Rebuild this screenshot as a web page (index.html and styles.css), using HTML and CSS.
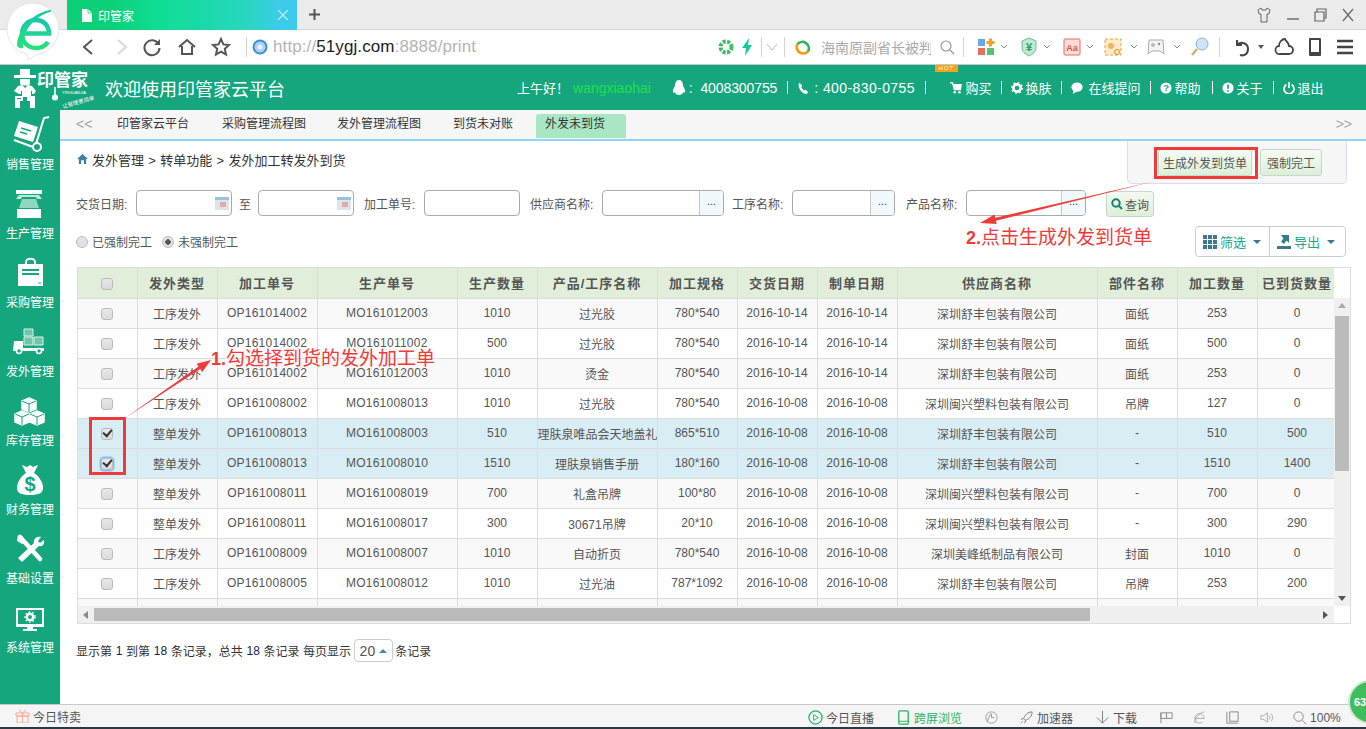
FILE: index.html
```html
<!DOCTYPE html>
<html lang="zh-CN">
<head>
<meta charset="utf-8">
<title>印管家</title>
<link rel="stylesheet" href="styles.css">
</head>
<body>
<div class="browser">
  <div class="tabbar">
    <div class="tab">
      <svg class="tab-file" viewBox="0 0 10 13"><path d="M0 0h6l4 4v9H0z" fill="#fff"/><path d="M6 0v4h4" fill="none" stroke="#0cc874" stroke-width=".8"/></svg>
      <span class="tab-title">印管家</span>
      <svg class="tab-close" viewBox="0 0 10 10"><path d="M0 0l10 10M10 0L0 10" stroke="#c8f4ff" stroke-width="1.2"/></svg>
    </div>
    <svg class="tab-new" viewBox="0 0 11 11"><path d="M5.5 0v11M0 5.5h11" stroke="#555" stroke-width="2"/></svg>
    <div class="winctl">
      <svg viewBox="0 0 14 16"><path d="M4 1L1 3l1 4h2v8h6V7h2l1-4-3-2-1 2H5z" fill="none" stroke="#666"/></svg>
      <svg class="m15" viewBox="0 0 14 16"><path d="M1 12h12" stroke="#666" stroke-width="1.4"/></svg>
      <svg class="m13" viewBox="0 0 14 16"><path d="M2 5h9v9H2zM4 5V2h9v9h-2" fill="none" stroke="#666" stroke-width="1.2"/></svg>
      <svg class="m14" viewBox="0 0 14 16"><path d="M2 2l10 12M12 2L2 14" stroke="#666" stroke-width="1.2"/></svg>
    </div>
  </div>

  <div class="addrbar">
    <svg class="tb" viewBox="0 0 20 20"><path d="M14 3L6 10l8 7" fill="none" stroke="#555" stroke-width="2"/></svg>
    <svg class="tb m14" viewBox="0 0 20 20"><path d="M6 3l8 7-8 7" fill="none" stroke="#d8d8d8" stroke-width="2"/></svg>
    <svg class="tb m10" viewBox="0 0 20 20"><path d="M16.5 7A7.5 7.5 0 1 0 17.5 11" fill="none" stroke="#555" stroke-width="2"/><path d="M18 2v6h-6z" fill="#555"/></svg>
    <svg class="tb m15" viewBox="0 0 20 20"><path d="M2 10l8-7 8 7M5 9v8h10V9" fill="none" stroke="#555" stroke-width="2"/></svg>
    <svg class="tb m14" viewBox="0 0 20 20"><path d="M10 2l2.4 5.4 5.6.6-4.2 3.8 1.2 5.7L10 14.6 5 17.5l1.2-5.7L2 8l5.6-.6z" fill="none" stroke="#555" stroke-width="2"/></svg>
    <span class="vline m15"></span>
    <svg class="globe m5" viewBox="0 0 16 16"><circle cx="8" cy="8" r="6.5" fill="#a9d2f5" stroke="#3d8fd8" stroke-width="2"/><circle cx="8" cy="8" r="2.5" fill="#e8f4fd"/></svg>
    <div class="url"><span class="url-dim">http://</span><span class="url-host">51ygj.com</span><span class="url-dim">:8888/print</span></div>

    <svg class="tb" viewBox="0 0 20 20"><circle cx="10" cy="10" r="5.5" fill="none" stroke="#45b863" stroke-width="4" stroke-dasharray="3 1.4"/></svg>
    <svg class="tb m1" viewBox="0 0 20 20"><path d="M12 1L5 11h4l-1 8 7-11h-4z" fill="#12c9a0"/></svg>
    <span class="vline m4"></span>
    <svg class="chev-lg m4" viewBox="0 0 12 12"><path d="M1 3l5 6 5-6" fill="none" stroke="#bbb"/></svg>
    <span class="vline m6"></span>
    <svg class="globe m10" viewBox="0 0 16 16"><path d="M8 14.5A6.5 6.5 0 0 1 2.500 5" fill="none" stroke="#f29a12" stroke-width="2.6"/><path d="M2.500 5A6.500 6.500 0 0 1 13 12.500" fill="none" stroke="#2fb35b" stroke-width="2.600"/><path d="M13 12.500A6.500 6.500 0 0 1 8 14.500" fill="none" stroke="#f29a12" stroke-width="2.600"/></svg>
    <div class="search-text m10">海南原副省长被判</div>
    <svg class="globe m8" viewBox="0 0 16 16"><circle cx="7" cy="7" r="5" fill="none" stroke="#999" stroke-width="1.200"/><path d="M11 11l4 4" stroke="#999" stroke-width="1.200"/></svg>
    <span class="vline m8"></span>
    <svg class="tb m12" viewBox="0 0 20 20"><rect x="2" y="2" width="7" height="7" fill="#6aa7ea"/><rect x="2" y="11" width="7" height="7" fill="#e46f5f"/><rect x="11" y="11" width="7" height="7" fill="#5cbf76"/><path d="M14.500 1.500v8M10.500 5.500h8" stroke="#f2a31e" stroke-width="3"/></svg>
    <svg class="chev m4" viewBox="0 0 8 6"><path d="M1 1l3 3 3-3" fill="none" stroke="#888"/></svg>
    <svg class="tb m11" viewBox="0 0 20 20"><path d="M10 1l7 3v6c0 5-3 7-7 9-4-2-7-4-7-9V4z" fill="#bfe8d2" stroke="#6bbd92"/><text x="10" y="14" class="ico-text green-t">¥</text></svg>
    <svg class="chev m4" viewBox="0 0 8 6"><path d="M1 1l3 3 3-3" fill="none" stroke="#888"/></svg>
    <svg class="tb m11" viewBox="0 0 20 20"><rect x="2" y="2" width="16" height="16" rx="1" fill="#fbdcd8" stroke="#e46f5f"/><text x="10" y="14" class="ico-text red-t">Aa</text></svg>
    <svg class="chev m4" viewBox="0 0 8 6"><path d="M1 1l3 3 3-3" fill="none" stroke="#888"/></svg>
    <svg class="tb m9" viewBox="0 0 20 20"><rect x="2" y="2" width="16" height="16" fill="#fdeccc" stroke="#f0a020" stroke-dasharray="3 2"/><circle cx="8" cy="9" r="3" fill="#f2b35e"/><circle cx="14" cy="15" r="2.500" fill="none" stroke="#e88420"/></svg>
    <svg class="chev m7" viewBox="0 0 8 6"><path d="M1 1l3 3 3-3" fill="none" stroke="#888"/></svg>
    <svg class="tb m8" viewBox="0 0 20 20"><path d="M3 3h14l1 14-4-3H6l-4 3z" fill="#f4f4f4" stroke="#aaa"/><circle cx="13" cy="7" r="1.200" fill="#e46f5f"/><circle cx="7" cy="8" r="2" fill="#bbb"/></svg>
    <svg class="chev m7" viewBox="0 0 8 6"><path d="M1 1l3 3 3-3" fill="none" stroke="#888"/></svg>
    <svg class="tb m9" viewBox="0 0 20 20"><circle cx="12" cy="7" r="6" fill="#cfe4f4" stroke="#8ab2d2"/><path d="M7 12l-5 6" stroke="#d4b078" stroke-width="2.500"/></svg>
    <span class="vline m9"></span>
    <svg class="tb m12" viewBox="0 0 20 20"><path d="M5 3v5h5M5 8c4-4 11-2 11 4s-5 7-8 6" fill="none" stroke="#444" stroke-width="2"/></svg>
    <svg class="chev m5" viewBox="0 0 8 6"><path d="M1 1h6L4 5z" fill="#555"/></svg>
    <svg class="tb m9" viewBox="0 0 20 20"><path d="M6 17a4 4 0 0 1-1-8c0-4 3-7 6-7 0 2 4 3 4 7a4 4 0 0 1 0 8z" fill="none" stroke="#444" stroke-width="1.800"/></svg>
    <svg class="tb m11" viewBox="0 0 20 20"><rect x="4" y="1" width="12" height="18" rx="1" fill="#444"/><rect x="6" y="3" width="8" height="12" fill="#fff"/></svg>
    <svg class="tb m10" viewBox="0 0 20 20"><path d="M2 4h16M2 10h16M2 16h16" stroke="#444" stroke-width="2.400"/></svg>
  </div>

  <header class="apphead">
    <div class="logo">
      <svg class="logo-man" viewBox="0 0 22 40"><path d="M6 0h10v6h6v3H0V6h6z" fill="#fff"/><path d="M6 10h10v5c-2 2-8 2-10 0z" fill="#fff"/><path d="M4 17l4-1 3 3 3-3 4 1 4 5-2 3h-2v-3h-1v6H8v-6H7v3H5l-5-3z" fill="#fff"/><path d="M1 27h8v5H6v7H1zM3 29v1h4v-1zM13 27h8v12h-5v-7h-3z" fill="#fff"/></svg>
      <svg class="logo-stem" viewBox="0 0 8 14"><path d="M4 0v9" stroke="#fff" stroke-width="1.500"/><circle cx="4" cy="10.500" r="3" fill="#fff"/></svg>
      <div class="logo-words">
        <div class="logo-name">印管家</div>
        <div class="logo-pin">YINGUANJIA</div>
        <div class="logo-slogan">让管理更简单</div>
      </div>
    </div>
    <div class="welcome">欢迎使用印管家云平台</div>
    <nav class="headnav">
      <span>上午好！</span>
      <span class="username">wangxiaohai</span>
      <svg class="hi-qq" viewBox="0 0 14 16"><path d="M7 0c3 0 4 3 4 6 2 3 3 6 1 7l-1-1c0 2-2 3-4 3s-4-1-4-3l-1 1C0 12 1 9 3 6c0-3 1-6 4-6z" fill="#fff"/></svg>
      <span class="num tel1">: 4008300755</span><i class="sep"></i>
      <svg class="hi" viewBox="0 0 14 14"><path d="M3 1l3 3-1 2 3 4 2-1 3 3-2 2C6 14 1 7 2 2z" fill="#fff"/></svg>
      <span class="num tel2">: 400-830-0755</span><i class="sep sep-cart"></i>
      <span class="buy">
        <em class="hot">HOT</em>
        <svg class="hi" viewBox="0 0 14 14"><path d="M0 1h3l2 8h7l1-6H4" fill="none" stroke="#fff" stroke-width="1.500"/><path d="M4 3h9l-1 6H5z" fill="#fff"/><circle cx="5.500" cy="12" r="1.500" fill="#fff"/><circle cx="11" cy="12" r="1.500" fill="#fff"/></svg>
        <span class="buy-text">购买</span>
      </span><i class="sep"></i>
      <svg class="hi" viewBox="0 0 14 14"><circle cx="7" cy="7" r="4.200" fill="none" stroke="#fff" stroke-width="3"/><circle cx="7" cy="7" r="6" fill="none" stroke="#fff" stroke-width="2" stroke-dasharray="2 2.700"/></svg>
      <span>换肤</span><i class="sep"></i>
      <svg class="hi hi-wide" viewBox="0 0 14 14"><ellipse cx="7" cy="6" rx="6.500" ry="5.500" fill="#fff"/><path d="M3 9l-1 5 5-3z" fill="#fff"/></svg>
      <span>在线提问</span><i class="sep"></i>
      <svg class="hi" viewBox="0 0 14 14"><circle cx="7" cy="7" r="6.500" fill="#fff"/><text x="7" y="11" class="ico-text hd-t">?</text></svg>
      <span class="tail2">帮助</span><i class="sep"></i>
      <svg class="hi" viewBox="0 0 14 14"><circle cx="7" cy="7" r="6.500" fill="#fff"/><path d="M7 3v5M7 9.500v2" stroke="#16a67e" stroke-width="2"/></svg>
      <span class="tail3">关于</span><i class="sep"></i>
      <svg class="hi" viewBox="0 0 14 14"><path d="M4 3a5.800 5.800 0 1 0 6 0" fill="none" stroke="#fff" stroke-width="2"/><path d="M7 0v7" stroke="#fff" stroke-width="2"/></svg>
      <span>退出</span>
    </nav>
  </header>

  <div class="appbody">
    <aside class="sidebar">
      <a class="side-item">
        <svg viewBox="0 0 44 40"><path d="M11 9l19 6-5 15-19-6z" fill="#fff"/><path d="M13 16l10 3M12 20l7 2" stroke="#16a67e" stroke-width="1.500"/><path d="M41 5l-5 1-8 26" fill="none" stroke="#fff" stroke-width="2"/><circle cx="29" cy="35" r="4" fill="none" stroke="#fff" stroke-width="2"/><path d="M6 28l19 7" stroke="#fff" stroke-width="2"/></svg>
        <span>销售管理</span>
      </a>
      <a class="side-item">
        <svg viewBox="0 0 44 40"><path d="M8 9h26v4H8z" fill="#fff"/><path d="M11 14h20l3 4h-5l-1-2H14l-1 2H8z" fill="#bfe9da"/><path d="M14 18h14l3 9H11z" fill="#8fd6bf"/><path d="M9 28h24v9H9z" fill="#fff"/></svg>
        <span>生产管理</span>
      </a>
      <a class="side-item">
        <svg viewBox="0 0 44 40"><path d="M10 14h25v22H10z" fill="#fff"/><path d="M18 14v-2a4 3 0 0 1 9 0v2" fill="none" stroke="#fff" stroke-width="2"/><path d="M14 20h17M14 24h17" stroke="#16a67e" stroke-width="2"/><path d="M30 33h3" stroke="#8fd6bf" stroke-width="2"/></svg>
        <span>采购管理</span>
      </a>
      <a class="side-item">
        <svg viewBox="0 0 44 40"><path d="M16 10h9v7h-9zM16 18h9v8h-9zM26 18h9v8h-9z" fill="#6cc7aa" stroke="#d5f0e7"/><path d="M6 22h9v7h21v3H5z" fill="#fff"/><circle cx="11" cy="32" r="2.500" fill="#16a67e" stroke="#fff" stroke-width="1.500"/><circle cx="31" cy="32" r="2.500" fill="#16a67e" stroke="#fff" stroke-width="1.500"/></svg>
        <span>发外管理</span>
      </a>
      <a class="side-item">
        <svg viewBox="0 0 44 40"><g fill="none" stroke="#fff" stroke-width="1.500"><path d="M21 10l7 3v8l-7 3-7-3v-8z" fill="#fff"/><path d="M14 23l7 3v8l-7 3-7-3v-8z" fill="#fff"/><path d="M29 23l7 3v8l-7 3-7-3v-8z" fill="#fff"/></g><path d="M14 13l7 3 7-3M21 16v8M7 26l7 3 7-3M14 29v8M22 26l7 3 7-3M29 29v8" fill="none" stroke="#16a67e"/></svg>
        <span>库存管理</span>
      </a>
      <a class="side-item">
        <svg viewBox="0 0 44 40"><path d="M14 8l5 2 3-2 3 2 5-2-4 8c6 4 9 10 9 15 0 5-4 7-13 7s-13-2-13-7c0-5 3-11 9-15z" fill="#fff"/><text x="22" y="34" class="ico-text money-t">$</text></svg>
        <span>财务管理</span>
      </a>
      <a class="side-item">
        <svg viewBox="0 0 44 40"><path d="M12 11l20 22" stroke="#fff" stroke-width="4.500" stroke-linecap="round"/><path d="M10 9l4 1 3 5-3 3-5-3z" fill="#fff"/><path d="M33 11l-3 4 2 2 4-3c1 3-1 7-5 6L14 36l-4-4 16-15c-1-4 3-7 7-6z" fill="#fff"/></svg>
        <span>基础设置</span>
      </a>
      <a class="side-item">
        <svg viewBox="0 0 44 40"><rect x="9" y="14" width="26" height="16" fill="none" stroke="#fff" stroke-width="2"/><path d="M8 30h28v2H8zM19 32h6v2h4v2H15v-2h4z" fill="#fff"/><circle cx="22" cy="22" r="3.200" fill="none" stroke="#fff" stroke-width="2.400"/><circle cx="22" cy="22" r="5" fill="none" stroke="#fff" stroke-width="1.500" stroke-dasharray="1.500 2.100"/></svg>
        <span>系统管理</span>
      </a>
    </aside>

    <main class="main">
      <div class="tabstrip">
        <span class="nav-prev">&lt;&lt;</span>
        <a class="pt pt1">印管家云平台</a>
        <a class="pt pt2">采购管理流程图</a>
        <a class="pt pt3">发外管理流程图</a>
        <a class="pt pt4">到货未对账</a>
        <a class="pt pt-active">外发未到货</a>
        <span class="nav-next">&gt;&gt;</span>
      </div>

      <div class="crumb">
        <svg class="crumb-home" viewBox="0 0 12 11"><path d="M6 0l6 5.500h-2V11H7.500V7h-3v4H2V5.500H0z" fill="#3f7f9e"/></svg>
        <span>发外管理 &gt; 转单功能 &gt; 发外加工转发外到货</span>
      </div>

      <div class="filters">
        <label class="lbl l54">交货日期:</label>
        <div class="box w96 m6"><input class="inp"><svg class="cal" viewBox="0 0 14 13"><rect width="14" height="13" fill="#d9e6ee"/><rect y="0" width="14" height="3" fill="#9dc2d8"/><rect x="5" y="5" width="6" height="5" fill="#e9a9a0"/></svg></div>
        <span class="lbl l12 m7">至</span>
        <div class="box w96 m7"><input class="inp"><svg class="cal" viewBox="0 0 14 13"><rect width="14" height="13" fill="#d9e6ee"/><rect y="0" width="14" height="3" fill="#9dc2d8"/><rect x="5" y="5" width="6" height="5" fill="#e9a9a0"/></svg></div>
        <label class="lbl l54 m10">加工单号:</label>
        <div class="box w96 m6"><input class="inp"></div>
        <label class="lbl l65 m10">供应商名称:</label>
        <div class="box w122 m7"><input class="inp"><span class="more">...</span></div>
        <label class="lbl l54 m8">工序名称:</label>
        <div class="box w103 m6"><input class="inp"><span class="more">...</span></div>
        <label class="lbl l54 m11">产品名称:</label>
        <div class="box w120 m6"><input class="inp"><span class="more">...</span></div>
        <button class="query">
          <svg viewBox="0 0 12 12"><circle cx="5" cy="5" r="3.700" fill="none" stroke="#16806a" stroke-width="2"/><path d="M8 8l3 3" stroke="#16806a" stroke-width="2"/></svg>查询
        </button>
      </div>

      <div class="toolrow">
        <div class="radios">
          <span class="radio"></span><span class="radio-text">已强制完工</span>
          <span class="radio radio-on m10"></span><span class="radio-text">未强制完工</span>
        </div>
        <div class="btngroup">
          <button class="gbtn gbtn-filter">
            <svg viewBox="0 0 14 14"><path d="M0 0h4v4H0zM5 0h4v4H5zM10 0h4v4h-4zM0 5h4v4H0zM5 5h4v4H5zM10 5h4v4h-4zM0 10h4v4H0zM5 10h4v4H5zM10 10h4v4h-4z" fill="#3a7a8a"/></svg>筛选<i class="caret"></i>
          </button>
          <button class="gbtn gbtn-export">
            <svg viewBox="0 0 14 14"><path d="M0 11h14v3H0z" fill="#3a7a8a"/><path d="M4 0h8v8L9.500 5.500 7 9 4 6.500l2.500-3z" fill="#3a7a8a"/></svg>导出<i class="caret"></i>
          </button>
        </div>
      </div>

      <section class="grid">
        <div class="grid-top">
          <div class="grid-view">
            <table class="dt">
              <colgroup>
                <col class="c59"><col class="c80"><col class="c100"><col class="c140"><col class="c80"><col class="c120"><col class="c80"><col class="c80"><col class="c80"><col class="c200"><col class="c80"><col class="c80"><col class="c80">
              </colgroup>
              <thead>
                <tr><th><span class="ck"></span></th><th>发外类型</th><th>加工单号</th><th>生产单号</th><th>生产数量</th><th>产品/工序名称</th><th>加工规格</th><th>交货日期</th><th>制单日期</th><th>供应商名称</th><th>部件名称</th><th>加工数量</th><th>已到货数量</th></tr>
              </thead>
              <tbody>
                <tr class="alt"><td><span class="ck"></span></td><td>工序发外</td><td>OP161014002</td><td>MO161012003</td><td>1010</td><td>过光胶</td><td>780*540</td><td>2016-10-14</td><td>2016-10-14</td><td>深圳舒丰包装有限公司</td><td>面纸</td><td>253</td><td>0</td></tr>
                <tr><td><span class="ck"></span></td><td>工序发外</td><td>OP161014002</td><td>MO161011002</td><td>500</td><td>过光胶</td><td>780*540</td><td>2016-10-14</td><td>2016-10-14</td><td>深圳舒丰包装有限公司</td><td>面纸</td><td>500</td><td>0</td></tr>
                <tr class="alt"><td><span class="ck"></span></td><td>工序发外</td><td>OP161014002</td><td>MO161012003</td><td>1010</td><td>烫金</td><td>780*540</td><td>2016-10-14</td><td>2016-10-14</td><td>深圳舒丰包装有限公司</td><td>面纸</td><td>253</td><td>0</td></tr>
                <tr><td><span class="ck"></span></td><td>工序发外</td><td>OP161008002</td><td>MO161008013</td><td>1010</td><td>过光胶</td><td>780*540</td><td>2016-10-08</td><td>2016-10-08</td><td>深圳闽兴塑料包装有限公司</td><td>吊牌</td><td>127</td><td>0</td></tr>
                <tr class="sel"><td><span class="ck on"></span></td><td>整单发外</td><td>OP161008013</td><td>MO161008003</td><td>510</td><td>理肤泉唯品会天地盖礼</td><td>865*510</td><td>2016-10-08</td><td>2016-10-08</td><td>深圳舒丰包装有限公司</td><td>-</td><td>510</td><td>500</td></tr>
                <tr class="sel"><td><span class="ck on focus"></span></td><td>整单发外</td><td>OP161008013</td><td>MO161008010</td><td>1510</td><td>理肤泉销售手册</td><td>180*160</td><td>2016-10-08</td><td>2016-10-08</td><td>深圳舒丰包装有限公司</td><td>-</td><td>1510</td><td>1400</td></tr>
                <tr class="alt"><td><span class="ck"></span></td><td>整单发外</td><td>OP161008011</td><td>MO161008019</td><td>700</td><td>礼盒吊牌</td><td>100*80</td><td>2016-10-08</td><td>2016-10-08</td><td>深圳闽兴塑料包装有限公司</td><td>-</td><td>700</td><td>0</td></tr>
                <tr><td><span class="ck"></span></td><td>整单发外</td><td>OP161008011</td><td>MO161008017</td><td>300</td><td>30671吊牌</td><td>20*10</td><td>2016-10-08</td><td>2016-10-08</td><td>深圳闽兴塑料包装有限公司</td><td>-</td><td>300</td><td>290</td></tr>
                <tr class="alt"><td><span class="ck"></span></td><td>工序发外</td><td>OP161008009</td><td>MO161008007</td><td>1010</td><td>自动折页</td><td>780*540</td><td>2016-10-08</td><td>2016-10-08</td><td>深圳美峰纸制品有限公司</td><td>封面</td><td>1010</td><td>0</td></tr>
                <tr><td><span class="ck"></span></td><td>工序发外</td><td>OP161008005</td><td>MO161008012</td><td>1010</td><td>过光油</td><td>787*1092</td><td>2016-10-08</td><td>2016-10-08</td><td>深圳舒丰包装有限公司</td><td>吊牌</td><td>253</td><td>200</td></tr>
                <tr class="alt"><td></td><td></td><td></td><td></td><td></td><td></td><td></td><td></td><td></td><td></td><td></td><td></td><td></td></tr>
              </tbody>
            </table>
          </div>
          <div class="vscroll">
            <i class="arr arr-up"></i>
            <div class="vthumb"></div>
            <i class="arr arr-down"></i>
          </div>
        </div>
        <div class="hscroll">
          <div class="htrack">
            <i class="arr arr-left"></i>
            <div class="hthumb"></div>
            <i class="arr arr-right"></i>
          </div>
          <div class="corner"></div>
        </div>
      </section>

      <div class="pager">
        显示第 <b>1</b> 到第 <b>18</b> 条记录，总共 <b>18</b> 条记录 每页显示
        <span class="pagesize">20<i class="caret-up"></i></span>
        条记录
      </div>

      <div class="actions">
        <button class="act act-main">生成外发到货单</button>
        <button class="act">强制完工</button>
      </div>
    </main>
  </div>

  <footer class="statusbar">
    <svg class="st-gift" viewBox="0 0 15 14"><path d="M1 4h13v3H1zM2 7h11v7H2zM7.500 4v10M4 1l3.500 3L11 1" fill="none" stroke="#f4a899"/></svg>
    <span class="st-text">今日特卖</span>
    <div class="st-right">
      <svg class="st-ic" viewBox="0 0 16 16"><circle cx="8" cy="8" r="7" fill="none" stroke="#1eb85f" stroke-width="1.400"/><path d="M6 5l5 3-5 3z" fill="none" stroke="#1eb85f"/></svg>
      <span class="st-text m3">今日直播</span>
      <svg class="st-ic m22" viewBox="0 0 16 16"><rect x="3" y="1" width="10" height="14" rx="1" fill="none" stroke="#1eb85f" stroke-width="1.400"/><path d="M3 12h10" stroke="#1eb85f"/></svg>
      <span class="st-text st-green m1">跨屏浏览</span>
      <svg class="st-ic m22" viewBox="0 0 16 16"><circle cx="8" cy="8" r="6" fill="none" stroke="#999"/><path d="M8 4v4h3M3 13l4-9" fill="none" stroke="#999"/></svg>
      <svg class="st-ic m20" viewBox="0 0 16 16"><path d="M14 2c-5 0-8 4-9 7l2 2c3-1 7-4 7-9zM5 9l-3 1M7 11l-1 3M4 12l-2 2" fill="none" stroke="#777"/></svg>
      <span class="st-text m3">加速器</span>
      <svg class="st-ic m22" viewBox="0 0 16 16"><path d="M8 1v13M2 8l6 6 6-6" fill="none" stroke="#777"/></svg>
      <span class="st-text m3">下载</span>
      <svg class="st-ic m22" viewBox="0 0 16 16"><path d="M2 3h12v6H2zM8 3v6M2 3v11" fill="none" stroke="#888"/></svg>
      <svg class="st-ic m18" viewBox="0 0 16 16"><path d="M3 9h10a5 5 0 1 0-2 4M13 2C8 3 3 8 3 14" fill="none" stroke="#aaa"/></svg>
      <svg class="st-ic m18" viewBox="0 0 16 16"><path d="M5 2h9v10H5zM2 2v12h12" fill="none" stroke="#888"/></svg>
      <svg class="st-ic m19" viewBox="0 0 16 16"><path d="M2 6v4h3l4 3V3L5 6zM11 6c1 1 1 3 0 4M13 4c2 2 2 6 0 8" fill="none" stroke="#aaa"/></svg>
      <svg class="st-ic m18" viewBox="0 0 16 16"><circle cx="7" cy="7" r="5" fill="none" stroke="#888"/><path d="M11 11l4 4" stroke="#888"/></svg>
      <span class="st-num m3">100%</span>
    </div>
  </footer>

  <!-- overlays -->
  <svg class="browser-logo" viewBox="0 0 54 60">
    <path d="M27 1a26 26 0 0 1 3 51.800L22 58l-1-5.700A26 26 0 0 1 27 1z" fill="#fff" stroke="#e6e6e6"/>
    <defs><linearGradient id="eg" x1="0" y1="0" x2="0" y2="1"><stop offset="0" stop-color="#16c7b0"/><stop offset="1" stop-color="#28e07c"/></linearGradient></defs>
    <path d="M18 31.500h25C43 23 37 18 30 18c-8 0-14 6-14 14 0 8 6 14 14 14 6 0 10-3 12-6" fill="none" stroke="url(#eg)" stroke-width="4.500"/>
    <path d="M11 42C13 26 27 11 44 8c2 0 2 1 0 2C29 14 17 27 17 46c-4 1-6-1-6-4z" fill="url(#eg)"/>
  </svg>
  <div class="badge"><span>63</span></div>

  <div class="mark mark-check"></div>
  <div class="mark mark-btn"></div>
  <svg class="arrows" viewBox="0 0 1366 729">
    <polygon points="125,418 198.600,366.600 196.600,363.700 211,360 202.200,372 200.200,369" fill="#f03a3a"/>
    <polygon points="1155,181 995.200,217.800 994.400,214.400 980,223 996.700,224.100 995.900,220.800" fill="#f03a3a"/>
  </svg>
  <div class="note note-1"><b>1.</b>勾选择到货的发外加工单</div>
  <div class="note note-2"><b>2.</b>点击生成外发到货单</div>
</div>
</body>
</html>
```
FILE: styles.css
```css
* { box-sizing: border-box; }
html, body { margin: 0; padding: 0; height: 100%; overflow: hidden; background: #fff; }
body { font: 12px "Liberation Sans", "Noto Sans CJK SC", sans-serif; color: #555; }
svg { display: block; flex: none; }
button, input { font: inherit; }
em, i { font-style: normal; }

.m1 { margin-left: 1px; } .m3 { margin-left: 3px; } .m4 { margin-left: 4px; } .m5 { margin-left: 5px; }
.m6 { margin-left: 6px; } .m7 { margin-left: 7px; } .m8 { margin-left: 8px; } .m9 { margin-left: 9px; }
.m10 { margin-left: 10px; } .m11 { margin-left: 11px; } .m12 { margin-left: 12px; } .m13 { margin-left: 13px; }
.m14 { margin-left: 14px; } .m15 { margin-left: 15px; } .m18 { margin-left: 18px; } .m19 { margin-left: 19px; }
.m20 { margin-left: 20px; } .m22 { margin-left: 22px; }

.browser { position: relative; width: 1366px; height: 729px; display: flex; flex-direction: column; overflow: hidden; }

/* browser chrome */
.tabbar { height: 30px; flex: none; display: flex; align-items: flex-start; background: #ebebeb; border-bottom: 1px solid #d6d6d6; padding-left: 67px; }
.tab { width: 230px; height: 30px; display: flex; align-items: center; padding: 0 9px 0 15px; color: #fff; background: linear-gradient(90deg, #0cd078 0, #0cd078 20%, #0fdf95 40%, #1cd9ab 62%, #2bd6c4 80%, #3ccbea 92%); }
.tab-file { width: 10px; height: 13px; }
.tab-title { margin-left: 6px; font-size: 12px; }
.tab-close { width: 10px; height: 10px; margin-left: auto; }
.tab-new { width: 11px; height: 11px; margin: 9px 0 0 12px; }
.winctl { margin-left: auto; display: flex; padding: 7px 11px 0 0; }
.winctl svg { width: 14px; height: 16px; }

.addrbar { height: 35px; flex: none; display: flex; align-items: center; background: #fff; border-bottom: 1px solid #c8c8c8; padding: 0 11px 0 78px; }
.tb { width: 20px; height: 20px; }
.globe { width: 16px; height: 16px; }
.vline { width: 1px; height: 20px; background: #d4d4d4; flex: none; }
.url { width: 443px; margin-left: 5px; font-size: 17px; letter-spacing: .1px; white-space: nowrap; }
.url-dim { color: #b4b4b4; }
.url-host { color: #222; }
.chev-lg { width: 12px; height: 12px; }
.chev { width: 8px; height: 6px; }
.search-text { width: 110px; font-size: 14px; color: #aaa; white-space: nowrap; overflow: hidden; }
.ico-text { text-anchor: middle; font: bold 11px "Liberation Sans", sans-serif; }
.green-t { fill: #2a9c68; }
.red-t { fill: #d8574a; font-size: 9px; }
.hd-t { fill: #16a67e; font-size: 11px; }
.money-t { fill: #16a67e; font-size: 20px; }

/* app header */
.apphead { height: 45px; flex: none; display: flex; align-items: center; background: #16a67e; color: #fff; padding-left: 14px; }
.logo { width: 91px; height: 45px; display: flex; flex: none; position: relative; }
.logo-man { width: 22px; height: 40px; margin-top: 4px; }
.logo-stem { position: absolute; left: 37px; top: 22px; width: 8px; height: 14px; }
.logo-words { margin-left: 1px; padding-top: 7px; line-height: 1; }
.logo-name { font-size: 17px; font-weight: 700; }
.logo-pin { font-size: 4px; margin: 2px 0 0 25px; }
.logo-slogan { font-size: 5.500px; margin: 5px 0 0 25px; transform: rotate(-16deg); white-space: nowrap; }
.welcome { font-size: 18px; white-space: nowrap; }
.headnav { margin-left: 232px; display: flex; align-items: center; font-size: 13px; white-space: nowrap; }
.username { margin-left: 4px; color: #1fe04a; font-size: 14px; }
.num { font-size: 14px; }
.tel1 { letter-spacing: -.1px; word-spacing: 4px; }
.tel2 { margin-left: 3px; letter-spacing: .4px; }
.hi { width: 12px; height: 12px; margin-right: 2px; }
.hi-wide { margin-right: 5px; }
.hi-qq { width: 14px; height: 16px; margin-left: 21px; margin-right: 3px; }
.sep { width: 1px; height: 13px; background: #fff; margin: 0 9px 0 10px; flex: none; }
.sep-cart { margin-right: 24px; }
.tail2 { margin-right: 2px; }
.tail3 { margin-right: 1px; }
.buy { position: relative; display: flex; align-items: center; }
.buy-text { margin-left: 1.500px; }
.hot { position: absolute; left: -15px; top: -13px; width: 23px; height: 7px; background: #f4a21a; color: #fff; font-size: 6px; line-height: 7px; text-align: center; letter-spacing: 1px; }

/* body */
.appbody { flex: 1; min-height: 0; display: flex; }
.sidebar { width: 60px; flex: none; background: #16a67e; }
.side-item { height: 69px; display: flex; flex-direction: column; align-items: center; justify-content: flex-end; padding-bottom: 6px; color: #fff; font-size: 12px; line-height: 16px; }
.side-item svg { width: 44px; height: 40px; margin-bottom: 5px; }

.main { flex: 1; min-width: 0; position: relative; background: #fff; padding-left: 0; }
.tabstrip { height: 31px; display: flex; background: #f6f6f6; border-bottom: 2px solid #8fd5f5; border-top-left-radius: 4px; color: #333; }
.nav-prev { color: #a8a0a0; font-size: 14px; line-height: 28px; margin-left: 16px; width: 41px; }
.nav-next { color: #a8a8a8; font-size: 14px; line-height: 28px; margin-left: auto; margin-right: 14px; }
.pt { line-height: 29px; font-size: 12px; white-space: nowrap; }
.pt2 { margin-left: 33px; }
.pt3 { margin-left: 31px; }
.pt4 { margin-left: 32px; }
.pt-active { margin: 4px 0 0 23px; width: 90px; height: 24px; line-height: 21px; background: #a9e7c4; border-radius: 3px 3px 0 0; padding-left: 9px; }

.crumb { display: flex; align-items: center; height: 20px; margin: 8px 0 21px 17px; font-size: 13px; color: #333; word-spacing: .7px; }
.crumb-home { width: 11px; height: 10px; margin-right: 4px; }

.filters { display: flex; align-items: center; height: 27px; padding-left: 16px; }
.lbl { font-size: 12px; white-space: nowrap; color: #555; flex: none; }
.l12 { width: 12px; } .l54 { width: 54px; } .l65 { width: 65px; }
.box { height: 26px; align-self: flex-start; display: flex; align-items: center; border: 1px solid #aaa; border-radius: 4px; background: #fff; flex: none; overflow: hidden; }
.w96 { width: 96px; } .w122 { width: 122px; } .w103 { width: 103px; } .w120 { width: 120px; }
.inp { flex: 1; min-width: 0; height: 100%; border: 0; outline: 0; background: transparent; padding: 0 6px; }
.cal { width: 14px; height: 13px; margin-right: 2px; }
.more { width: 24px; height: 100%; flex: none; background: #f1f9fd; border-left: 1px solid #c8c8c8; text-align: center; color: #223399; line-height: 20px; font-size: 11px; }
.query { margin-left: 20px; width: 48px; height: 26px; display: flex; align-items: center; padding: 0 0 0 4px; border: 1px solid #c8d8c8; border-radius: 3px; background: linear-gradient(#f4faf2, #dcefd8); color: #555; font-size: 12px; margin-top: 1px; }
.query svg { width: 12px; height: 12px; margin-right: 2px; }

.toolrow { display: flex; align-items: center; justify-content: space-between; height: 31px; margin: 9px 20px 10px 16px; }
.radios { display: flex; align-items: center; }
.radio { width: 12px; height: 12px; border-radius: 50%; border: 1px solid #bbb; background: #e2e2e2; flex: none; }
.radio-on { background: radial-gradient(circle, #555 0 2.500px, #e4e4e4 3px); }
.radio-text { margin-left: 4px; font-size: 12px; }
.btngroup { display: flex; width: 151px; height: 31px; border: 1px solid #ccc; border-radius: 4px; }
.gbtn { display: flex; align-items: center; height: 100%; border: 0; background: #fff; color: #1aa68a; font-size: 13px; padding: 0 0 0 7px; border-radius: 4px; }
.gbtn svg { width: 14px; height: 14px; margin-right: 3px; }
.gbtn-filter { width: 74px; border-right: 1px solid #ccc; border-radius: 4px 0 0 4px; }
.gbtn-export { flex: 1; padding-left: 7px; }
.caret { width: 0; height: 0; margin-left: 7px; border: 4px solid transparent; border-top: 4px solid #3a7a8a; border-bottom: 0; }

/* grid */
.grid { width: 1274px; height: 357px; margin-left: 17px; border: 1px solid #ddd; display: flex; flex-direction: column; }
.grid-top { flex: 1; min-height: 0; display: flex; }
.grid-view { width: 1256px; overflow: hidden; flex: none; }
.dt { border-collapse: collapse; table-layout: fixed; width: 1259px; }
.c59 { width: 59px; } .c80 { width: 80px; } .c100 { width: 100px; } .c120 { width: 120px; } .c140 { width: 140px; } .c200 { width: 200px; }
.dt th, .dt td { height: 30px; padding: 0; border: 1px solid #ddd; text-align: center; white-space: nowrap; overflow: hidden; font-size: 12px; color: #555; }
.dt td:nth-child(3), .dt td:nth-child(4) { letter-spacing: .25px; }
.dt tr > :first-child { border-left: 0; }
.dt thead tr th { border-top: 0; }
.dt th { background: #e1eed9; font-size: 13px; font-weight: 700; letter-spacing: 1px; }
.dt tr.alt td { background: #f9f9f9; }
.dt tr.sel td { background: #d9edf4; }
.ck { display: inline-block; vertical-align: middle; position: relative; width: 12px; height: 12px; border: 1px solid #bbb; border-radius: 3px; background: linear-gradient(#e8e8e8, #dadada); }
.ck.on::after { content: ""; position: absolute; left: 1px; top: 0; width: 7px; height: 4px; border-left: 2.500px solid #333; border-bottom: 2.500px solid #333; transform: rotate(-50deg); }
.ck.focus { box-shadow: 0 0 0 1.500px #86bdf0; }

.vscroll { width: 16px; flex: none; margin-top: 30px; background: #f0f0f0; display: flex; flex-direction: column; align-items: center; position: relative; }
.vthumb { position: absolute; left: 1px; right: 1px; top: 18px; height: 155px; background: #bbb; }
.arr { width: 0; height: 0; border: 4px solid transparent; display: block; }
.arr-up { border-bottom: 5px solid #aaa; border-top: 0; margin-top: 5px; }
.arr-down { border-top: 5px solid #555; border-bottom: 0; margin-top: auto; margin-bottom: 5px; }
.hscroll { height: 17px; flex: none; display: flex; }
.htrack { width: 1256px; background: #f0f0f0; display: flex; align-items: center; position: relative; }
.hthumb { position: absolute; left: 16px; width: 996px; top: 2px; bottom: 2px; background: #bbb; }
.arr-left { border-right: 5px solid #888; border-left: 0; margin-left: 5px; }
.arr-right { border-left: 5px solid #555; border-right: 0; margin-left: auto; margin-right: 6px; }
.corner { flex: 1; background: #fff; }

.pager { display: flex; align-items: center; gap: 3.700px; margin: 15px 0 0 16px; height: 23px; font-size: 12px; color: #333; white-space: nowrap; }
.pager b { font-weight: 400; color: #224; }
.pagesize { margin: 0 -1px 0 -1px; width: 39px; height: 23px; display: flex; align-items: center; padding-left: 5px; border: 1px solid #ccc; border-radius: 4px; font-size: 14px; color: #555; }
.caret-up { width: 0; height: 0; margin-left: 4px; border: 4px solid transparent; border-bottom: 4px solid #3f8f9e; border-top: 0; }

.actions { position: absolute; left: 1067px; top: 31px; width: 220px; height: 43px; display: flex; align-items: flex-start; padding: 8px 0 0 30px; gap: 8px; background: #f7f7f7; border: 1px solid #dcdcec; border-top: 0; border-radius: 0 0 5px 5px; }
.act { height: 27px; padding: 0 5px; border: 1px solid #c8d8c8; border-radius: 3px; background: linear-gradient(#f6fbf4, #dcefd8); color: #555; font-size: 12px; white-space: nowrap; }
.act-main { width: 94px; padding: 0; }
.act:last-child { width: 62px; padding: 0; }

/* status bar */
.statusbar { height: 25px; flex: none; display: flex; align-items: center; padding-left: 15px; background: #f5f5f5; border-top: 1px solid #c8c8c8; border-bottom: 2px solid #2b3a42; }
.st-gift { width: 15px; height: 14px; }
.st-text { margin-left: 3px; font-size: 12px; color: #555; white-space: nowrap; }
.st-right { display: flex; align-items: center; position: absolute; left: 808px; bottom: 3px; }
.st-ic { width: 15px; height: 15px; }
.st-green { color: #1eb85f; }
.st-num { font-size: 12px; color: #555; }

/* overlays */
.browser-logo { position: absolute; left: 6px; top: 2px; width: 54px; height: 60px; }
.badge { position: absolute; left: 1348px; top: 680px; width: 44px; height: 44px; border-radius: 50%; background: #3fbc5c; border: 2px solid #cfe8d0; color: #fff; font-size: 11px; font-weight: 700; padding: 14px 0 0 4px; }
.mark { position: absolute; border: 3px solid #f03a3a; }
.mark-check { left: 89px; top: 417px; width: 37px; height: 58px; }
.mark-btn { left: 1154px; top: 147px; width: 104px; height: 32px; }
.arrows { position: absolute; left: 0; top: 0; width: 1366px; height: 729px; pointer-events: none; }
.note { position: absolute; color: #f03a3a; font-size: 19px; line-height: 24px; white-space: nowrap; }
.note b { font-size: 18px; font-weight: 700; }
.note-1 { left: 211px; top: 347px; }
.note-2 { left: 966px; top: 226px; }
```
